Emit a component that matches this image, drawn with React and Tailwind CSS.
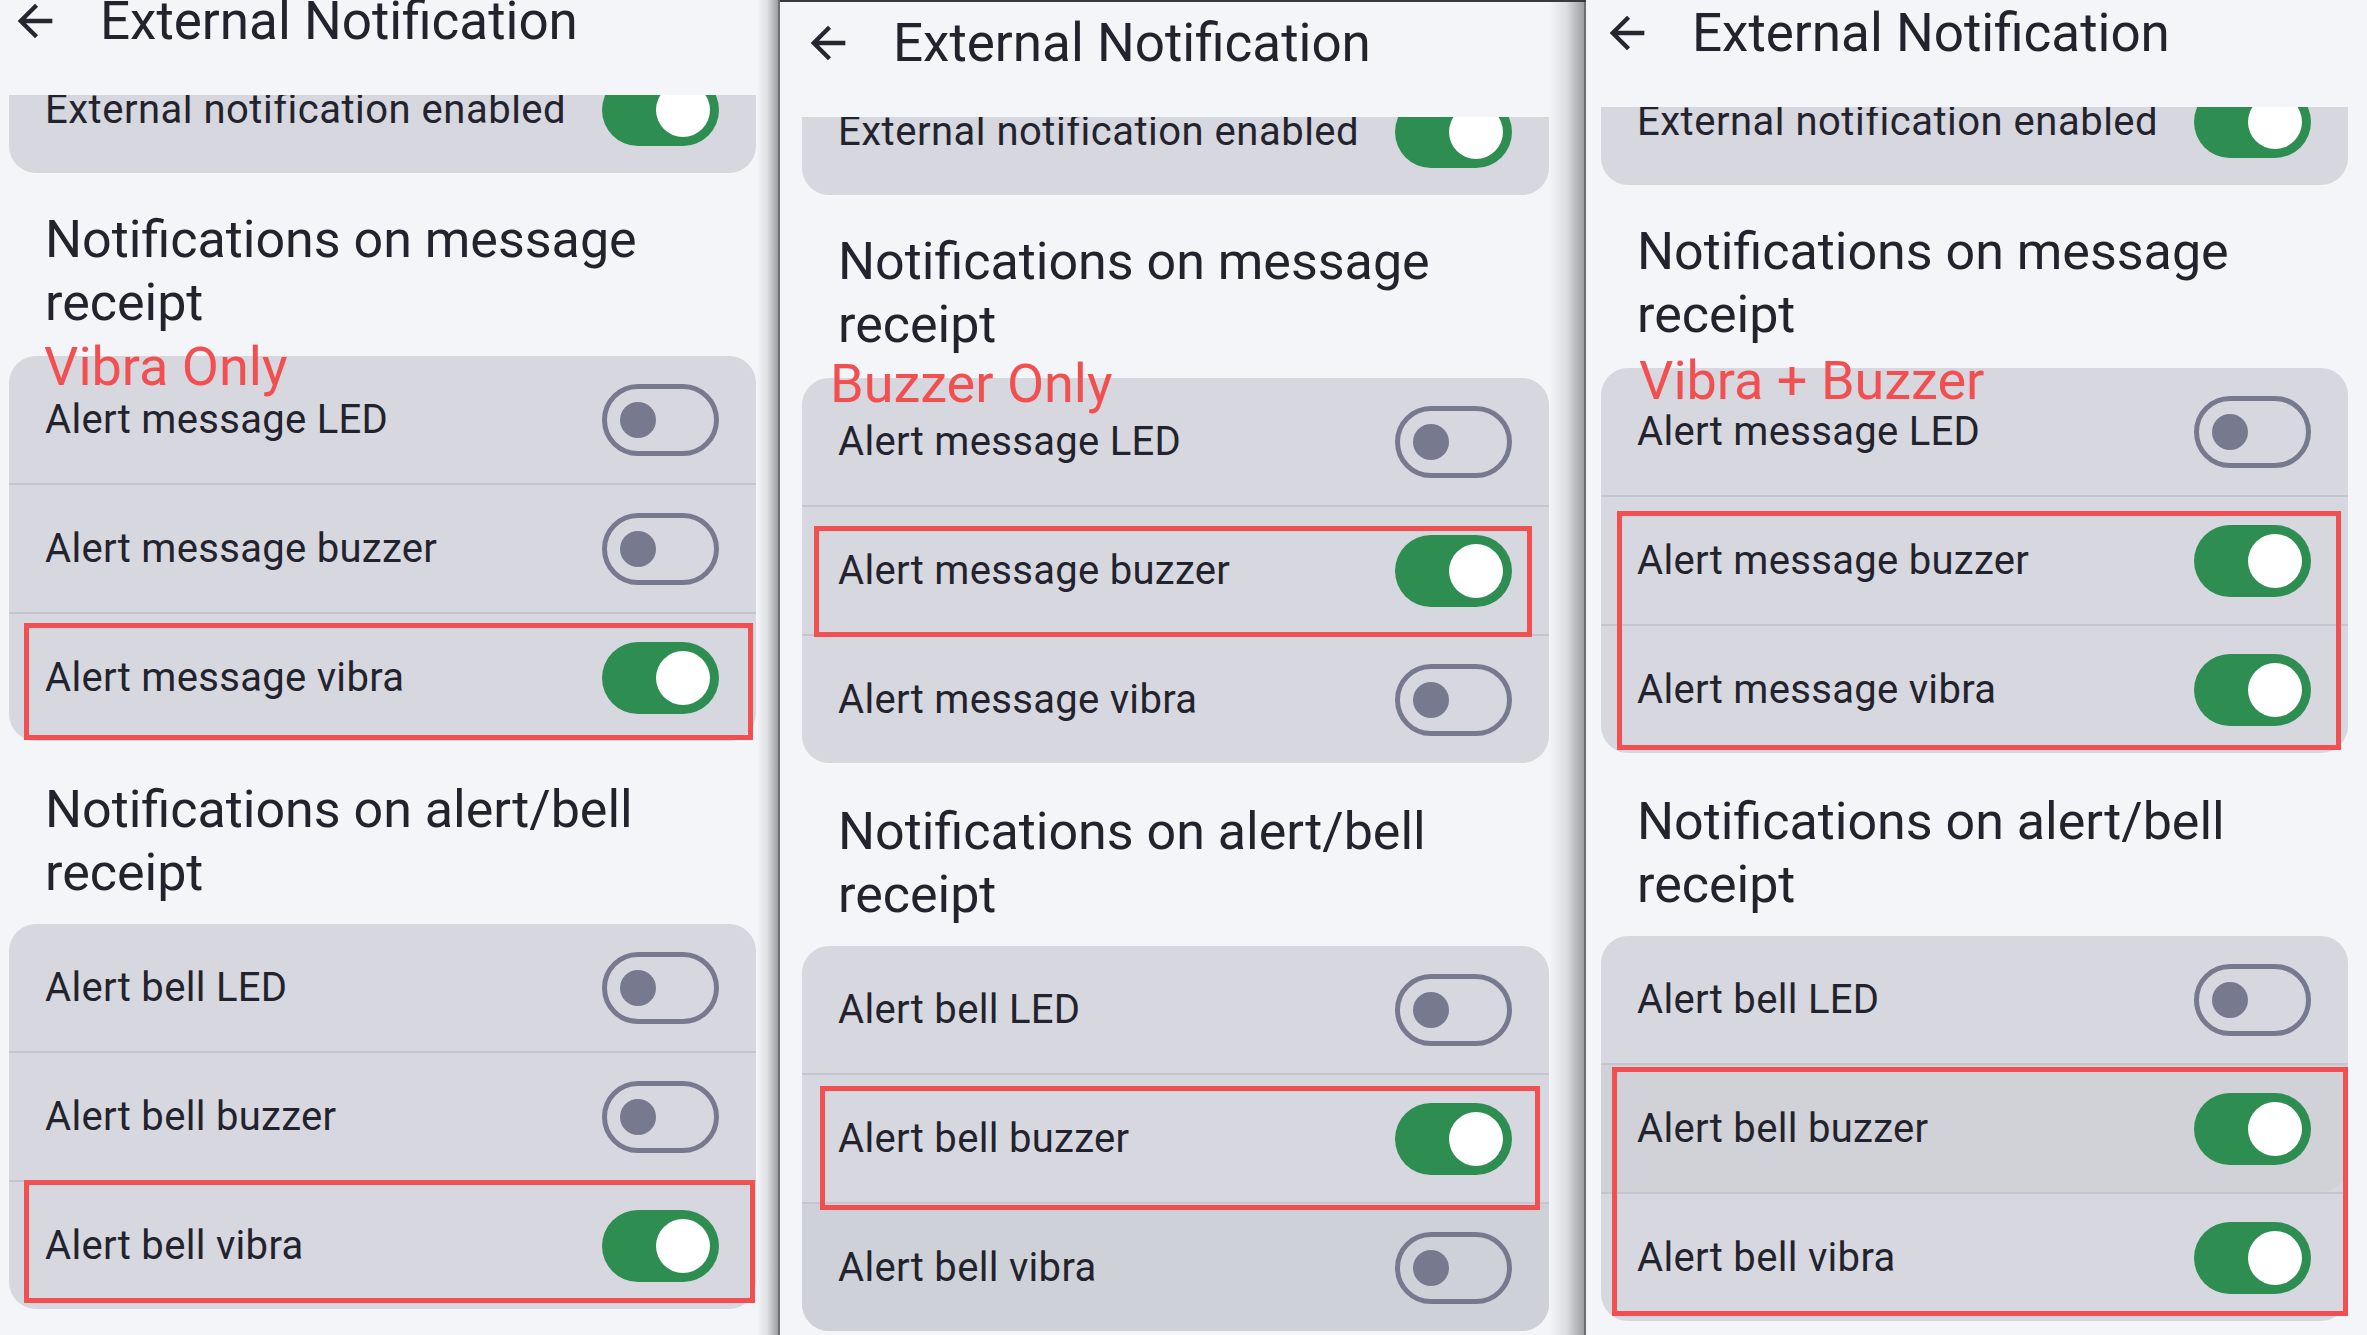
import React from "react";

const panels = [
  {
    key: "vibra",
    wrap: "w-[780px]",
    top: "pt-0",
    left: "pl-[9px]",
    edge: "w-[21px]",
    tag: "Vibra Only",
    tagPos: "left-[35px] top-[-16px]",
    msg: [false, false, true],
    bell: [false, false, true],
    msgBox: "top-[267px] left-[15px] right-[3px] bottom-[1px]",
    bellBox: "top-[256px] left-[15px] right-[1px] bottom-[6px]",
    bellBg: ["", "", ""],
  },
  {
    key: "buzzer",
    wrap: "w-[806px] border-t-2 border-[#3a3a3c]",
    top: "pt-[20px]",
    left: "pl-[22px]",
    edge: "w-[35px]",
    tag: "Buzzer Only",
    tagPos: "left-[28px] top-[-21px]",
    msg: [false, true, false],
    bell: [false, true, false],
    msgBox: "top-[148px] left-[12px] right-[17px] h-[111px]",
    bellBox: "top-[140px] left-[18px] right-[9px] h-[124px]",
    bellBg: ["", "", "bg-[#cfd1d9]"],
  },
  {
    key: "both",
    wrap: "flex-1",
    top: "pt-[12px]",
    left: "pl-[15px]",
    edge: "",
    tag: "Vibra + Buzzer",
    tagPos: "left-[38px] top-[-14px]",
    msg: [false, true, true],
    bell: [false, true, true],
    msgBox: "top-[143px] left-[16px] right-[7px] bottom-[3px]",
    bellBox: "top-[131px] left-[11px] right-[0px] bottom-[5px]",
    bellBg: ["", "bg-[#d1d1d8] rounded-br-[27px]", ""],
  },
];

function BackArrow() {
  return (
    <svg viewBox="0 0 24 24" className="h-[52px] w-[52px] shrink-0" fill="#262631">
      <path d="M20 11H7.83l5.59-5.59L12 4l-8 8 8 8 1.41-1.41L7.83 13H20v-2z" />
    </svg>
  );
}

function Toggle({ on }) {
  if (on) {
    return (
      <div className="flex h-[72px] w-[117px] shrink-0 items-center justify-end rounded-full bg-[#2e8e52] pr-[9px]">
        <div className="h-[54px] w-[54px] rounded-full bg-white" />
      </div>
    );
  }
  return (
    <div className="flex h-[72px] w-[117px] shrink-0 items-center rounded-full border-[5px] border-[#777a8e] pl-[13px]">
      <div className="h-[36px] w-[36px] rounded-full bg-[#777a8e]" />
    </div>
  );
}

function Row({ label, on, bg = "" }) {
  return (
    <div className={`flex h-[127px] items-center justify-between pl-[36px] pr-[37px] ${bg}`}>
      <span className="text-[40px] leading-none tracking-[0.3px] text-[#23232d]">{label}</span>
      <Toggle on={on} />
    </div>
  );
}

function Divider() {
  return <div className="h-[2px] bg-[#c5c5cf]" />;
}

function Group({ labels, states, bgs = ["", "", ""], tag, tagPos, box }) {
  return (
    <div className="relative">
      <div className="overflow-hidden rounded-[27px] bg-[#d7d7df]">
        <Row label={labels[0]} on={states[0]} bg={bgs[0]} />
        <Divider />
        <Row label={labels[1]} on={states[1]} bg={bgs[1]} />
        <Divider />
        <Row label={labels[2]} on={states[2]} bg={bgs[2]} />
      </div>
      {tag && (
        <span className={`absolute ${tagPos} text-[54px] leading-none text-[#f25050]`}>{tag}</span>
      )}
      <div className={`pointer-events-none absolute ${box} border-[5px] border-[#f25050]`} />
    </div>
  );
}

function Heading({ children }) {
  return (
    <h2 className="px-[36px] text-[52px] font-normal leading-[63px] text-[#23232d]">{children}</h2>
  );
}

function Panel({ p }) {
  return (
    <div className={`flex h-full shrink-0 ${p.wrap}`}>
      <div className={`flex min-w-0 flex-1 flex-col bg-[#f4f5f9] ${p.top} ${p.left}`}>
        <header className="h-[95px] w-[747px] shrink-0">
          <div className="flex h-[42px] items-center">
            <BackArrow />
            <h1 className="ml-[39px] text-[53px] font-normal leading-[42px] text-[#23232d]">
              External Notification
            </h1>
          </div>
        </header>
        <div className="min-h-0 w-[747px] flex-1 overflow-hidden">
          <div className="-mt-[49px] flex h-[127px] items-center justify-between rounded-[27px] bg-[#d7d7df] pl-[36px] pr-[37px]">
            <span className="text-[40px] leading-none tracking-[0.5px] text-[#23232d]">
              External notification enabled
            </span>
            <Toggle on />
          </div>
          <div className="mt-[35px]">
            <Heading>Notifications on message receipt</Heading>
          </div>
          <div className="mt-[22px]">
            <Group
              labels={["Alert message LED", "Alert message buzzer", "Alert message vibra"]}
              states={p.msg}
              tag={p.tag}
              tagPos={p.tagPos}
              box={p.msgBox}
            />
          </div>
          <div className="mt-[37px]">
            <Heading>Notifications on alert/bell receipt</Heading>
          </div>
          <div className="mt-[20px]">
            <Group
              labels={["Alert bell LED", "Alert bell buzzer", "Alert bell vibra"]}
              states={p.bell}
              bgs={p.bellBg}
              box={p.bellBox}
            />
          </div>
        </div>
      </div>
      {p.edge && (
        <>
          <div className={`${p.edge} h-full bg-gradient-to-r from-[#f4f5f9] via-[#dcdde1] to-[#9d9ea2]`} />
          <div className="h-full w-[2px] bg-[#6e6e70]" />
        </>
      )}
    </div>
  );
}

export default function App() {
  return (
    <div className="flex h-[1335px] w-[2367px] overflow-hidden bg-[#f4f5f9] font-[Roboto,sans-serif]">
      {panels.map((p) => (
        <Panel key={p.key} p={p} />
      ))}
    </div>
  );
}
